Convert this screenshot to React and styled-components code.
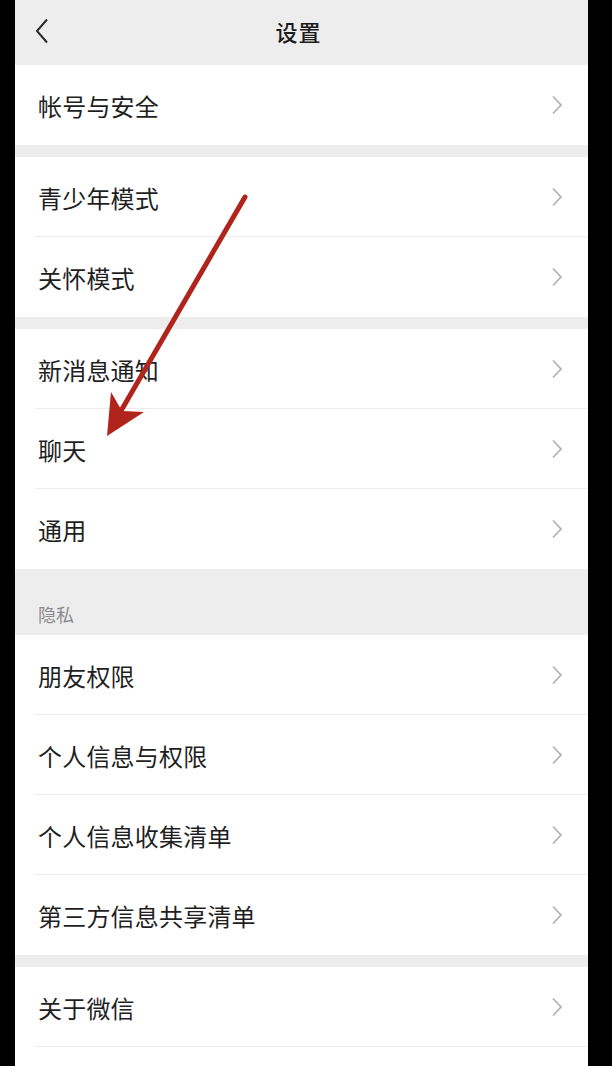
import React from 'react'
import styled, { createGlobalStyle } from 'styled-components'

const GlobalStyle = createGlobalStyle`
  body {
    margin: 0;
    background: #000;
    font-family: "Noto Sans CJK SC", "Noto Sans", sans-serif;
  }
`

const Screen = styled.div`
  position: relative;
  margin-left: 15px;
  width: 573px;
  height: 1066px;
  background: #ededed;
  overflow: hidden;
`

const TopBar = styled.div`
  height: 65px;
  display: flex;
  align-items: center;
  justify-content: center;
  position: relative;
`

const BackButton = styled.div`
  position: absolute;
  left: 20px;
  top: 17px;
  width: 18px;
  height: 28px;
  display: flex;
  align-items: center;
`

const Title = styled.h1`
  margin: 0 0 4px;
  font-size: 22px;
  font-weight: 500;
  color: #1c1c1c;
  letter-spacing: 1px;
  transform: translateX(-3px);
`

const Group = styled.div`
  background: #fff;
  margin-top: ${p => p.gap || 0}px;
`

const SectionTitle = styled.div`
  height: 66px;
  box-sizing: border-box;
  padding: 33px 0 0 23px;
  font-size: 18px;
  line-height: 24px;
  color: #8c8c8c;
`

const Row = styled.div`
  height: 80px;
  display: flex;
  align-items: center;
  justify-content: space-between;
  padding: 0 25px 0 23px;
  position: relative;
  &::after {
    content: '';
    display: ${p => (p.last ? 'none' : 'block')};
    position: absolute;
    left: 20px;
    right: 0;
    bottom: 0;
    height: 1px;
    background: #ececec;
  }
`

const Label = styled.span`
  font-size: 24px;
  color: #1f1f1f;
  letter-spacing: 0.2px;
`

const Chevron = () => (
  <svg width="12" height="20" viewBox="0 0 12 20">
    <path d="M2 1.5 L10 10 L2 18.5" fill="none" stroke="#b3b3b3" strokeWidth="1.8" />
  </svg>
)

const Overlay = styled.svg`
  position: absolute;
  left: 0;
  top: 0;
  pointer-events: none;
`

const groups = [
  { gap: 0, items: ['帐号与安全'] },
  { gap: 12, items: ['青少年模式', '关怀模式'] },
  { gap: 12, items: ['新消息通知', '聊天', '通用'] },
  { title: '隐私', items: ['朋友权限', '个人信息与权限', '个人信息收集清单', '第三方信息共享清单'] },
  { gap: 12, items: ['关于微信', ''] },
]

export default function App() {
  return (
    <>
      <GlobalStyle />
      <Screen>
        <TopBar>
          <BackButton>
            <svg width="14" height="26" viewBox="0 0 14 26">
              <path d="M12 1.5 L2 13 L12 24.5" fill="none" stroke="#2a2a2a" strokeWidth="2" />
            </svg>
          </BackButton>
          <Title>设置</Title>
        </TopBar>
        {groups.map((g, gi) => (
          <React.Fragment key={gi}>
            {g.title && <SectionTitle>{g.title}</SectionTitle>}
            <Group gap={g.title ? 0 : g.gap}>
              {g.items.map((item, i) => (
                <Row key={i} last={i === g.items.length - 1}>
                  {item && <Label>{item}</Label>}
                  {item && <Chevron />}
                </Row>
              ))}
            </Group>
          </React.Fragment>
        ))}
        <Overlay width="573" height="1066" viewBox="15 0 573 1066">
          <line x1="245" y1="197" x2="118" y2="416" stroke="#b0241b" strokeWidth="5" strokeLinecap="round" />
          <polygon points="107,436 111,392 122,411 144,412" fill="#b0241b" />
        </Overlay>
      </Screen>
    </>
  )
}
